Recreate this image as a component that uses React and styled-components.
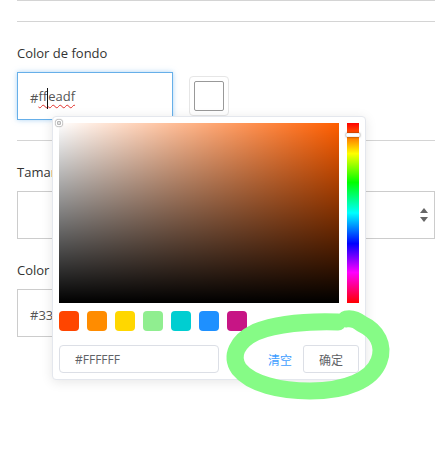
import React from 'react';
import styled, { createGlobalStyle } from 'styled-components';

const GlobalStyle = createGlobalStyle`
  body {
    margin: 0;
    background: #fff;
    font-family: "Open Sans", "Noto Sans CJK SC", sans-serif;
  }
`;

const predefine = ['#ff4500', '#ff8c00', '#ffd700', '#90ee90', '#00ced1', '#1e90ff', '#c71585'];

const App = () => {
    return (
        <Page>
            <GlobalStyle />
            <Form>
                <TopEdge />
                <Fieldset $ruled />
                <Fieldset $ruled>
                    <Field>
                        <Label>Color de fondo</Label>
                        <Row>
                            <TextInput $focused>
                                #<Misspelled>ff<Caret />eadf</Misspelled>
                            </TextInput>
                            <Trigger>
                                <TriggerInner />
                            </Trigger>
                        </Row>
                    </Field>
                </Fieldset>
                <Fieldset>
                    <Field>
                        <Label>Tamaño</Label>
                        <Select>
                            <Arrows>
                                <ArrowUp />
                                <ArrowDown />
                            </Arrows>
                        </Select>
                    </Field>
                    <Field>
                        <Label>Color de texto</Label>
                        <Row>
                            <TextInput>#333333</TextInput>
                            <Trigger>
                                <TriggerInner />
                            </Trigger>
                        </Row>
                    </Field>
                </Fieldset>
            </Form>

            <Dropdown>
                <Main>
                    <SVPanel>
                        <Cursor />
                    </SVPanel>
                    <Hue>
                        <HueThumb />
                    </Hue>
                </Main>
                <Predefine>
                    {predefine.map(c => <Swatch key={c} $color={c} />)}
                </Predefine>
                <Btns>
                    <ValueInput>#FFFFFF</ValueInput>
                    <ClearLink>清空</ClearLink>
                    <OkButton>确定</OkButton>
                </Btns>
            </Dropdown>

            {/* hand-drawn highlight over the buttons */}
            <Annotation viewBox="0 0 446 469" width="446" height="469">
                <path
                    d="M 338 322 C 308 321, 276 324, 256 332 C 237 341, 230 356, 239 369 C 251 384, 280 391, 310 391 C 346 391, 372 380, 379 361 C 385 345, 377 331, 362 324 C 357 320, 351 318, 346 319"
                    fill="none"
                    stroke="#86fb86"
                    strokeWidth="17"
                    strokeLinecap="round"
                    strokeLinejoin="round"
                />
            </Annotation>
        </Page>
    );
};

export default App;

const Page = styled.div`
    position: relative;
    width: 446px;
    height: 469px;
    overflow: hidden;
    padding: 0 11px 0 17px;
    box-sizing: border-box;
`;

const Form = styled.div`
    width: 418px;
`;

const TopEdge = styled.div`
    border-top: 1px solid #d4d4d4;
`;

const Fieldset = styled.div`
    padding-top: 20px;
    border-bottom: ${p => (p.$ruled ? '1px solid #d4d4d4' : 'none')};
`;

const Field = styled.div`
    margin-bottom: 20px;
`;

const Label = styled.div`
    font-size: 13px;
    line-height: 20px;
    color: #333;
    padding-top: 1px;
    margin-bottom: 9px;
`;

const Row = styled.div`
    display: flex;
    align-items: center;
    gap: 16px;
`;

const TextInput = styled.div`
    width: 156px;
    height: 48px;
    box-sizing: border-box;
    border: 1px solid ${p => (p.$focused ? '#66afe9' : '#ccc')};
    box-shadow: ${p => (p.$focused ? '0 0 5px rgba(102, 175, 233, 0.55)' : 'none')};
    padding: 3px 12px 0;
    display: flex;
    align-items: center;
    font-size: 13px;
    color: #555;
    white-space: pre;
`;

const Misspelled = styled.span`
    text-decoration: underline wavy #e0302a;
    text-decoration-thickness: 1px;
    text-underline-offset: 3px;
`;

const Caret = styled.span`
    display: inline-block;
    width: 1px;
    height: 21px;
    background: #111;
    vertical-align: middle;
    margin-top: 2px;
`;

const Trigger = styled.div`
    width: 40px;
    height: 40px;
    box-sizing: border-box;
    border: 1px solid #e6e6e6;
    border-radius: 4px;
    padding: 4px;
`;

const TriggerInner = styled.div`
    width: 100%;
    height: 100%;
    box-sizing: border-box;
    border: 1px solid #999;
    border-radius: 2px;
    background: #fff;
`;

const Select = styled.div`
    height: 48px;
    box-sizing: border-box;
    border: 1px solid #ccc;
    display: flex;
    align-items: center;
    justify-content: flex-end;
    padding-right: 6px;
`;

const Arrows = styled.div`
    display: flex;
    flex-direction: column;
    gap: 4px;
`;

const ArrowUp = styled.div`
    width: 0;
    height: 0;
    border-left: 4px solid transparent;
    border-right: 4px solid transparent;
    border-bottom: 5px solid #666;
`;

const ArrowDown = styled(ArrowUp)`
    border-bottom: none;
    border-top: 5px solid #666;
`;

const Dropdown = styled.div`
    position: absolute;
    left: 52px;
    top: 116px;
    width: 300px;
    padding: 6px;
    background: #fff;
    border: 1px solid #e4e7ed;
    border-radius: 4px;
    box-shadow: 0 2px 12px 0 rgba(0, 0, 0, 0.1);
`;

const Main = styled.div`
    display: flex;
    gap: 8px;
`;

const SVPanel = styled.div`
    position: relative;
    width: 280px;
    height: 180px;
    background: hsl(22, 100%, 50%);
    &::before, &::after {
        content: '';
        position: absolute;
        inset: 0;
    }
    &::before {
        background: linear-gradient(to right, #fff, rgba(255, 255, 255, 0));
    }
    &::after {
        background: linear-gradient(to top, #000, rgba(0, 0, 0, 0));
    }
`;

const Cursor = styled.div`
    position: absolute;
    left: -2px;
    top: -2px;
    width: 4px;
    height: 4px;
    border-radius: 50%;
    z-index: 1;
    box-shadow: 0 0 0 1.5px #fff, inset 0 0 1px 1px rgba(0, 0, 0, 0.3), 0 0 1px 2px rgba(0, 0, 0, 0.4);
`;

const Hue = styled.div`
    position: relative;
    width: 12px;
    height: 180px;
    background: linear-gradient(to bottom, #f00 0%, #ff0 17%, #0f0 33%, #0ff 50%, #00f 67%, #f0f 83%, #f00 100%);
`;

const HueThumb = styled.div`
    position: absolute;
    left: -1px;
    right: -1px;
    top: 10px;
    height: 4px;
    box-sizing: border-box;
    background: #fff;
    border: 1px solid #f0f0f0;
    border-radius: 1px;
    box-shadow: 0 0 2px rgba(0, 0, 0, 0.6);
`;

const Predefine = styled.div`
    display: flex;
    gap: 8px;
    margin-top: 8px;
`;

const Swatch = styled.div`
    width: 20px;
    height: 20px;
    border-radius: 4px;
    background: ${p => p.$color};
`;

const Btns = styled.div`
    display: flex;
    align-items: center;
    margin-top: 14px;
`;

const ValueInput = styled.div`
    width: 160px;
    height: 28px;
    box-sizing: border-box;
    border: 1px solid #dcdfe6;
    border-radius: 4px;
    padding-left: 15px;
    display: flex;
    align-items: center;
    font-size: 12px;
    color: #606266;
    margin-right: auto;
`;

const ClearLink = styled.span`
    font-family: "Noto Sans CJK SC", sans-serif;
    font-size: 12px;
    color: #409eff;
    margin-right: 11px;
`;

const OkButton = styled.div`
    height: 28px;
    box-sizing: border-box;
    padding: 0 15px;
    display: flex;
    align-items: center;
    border: 1px solid #dcdfe6;
    border-radius: 3px;
    font-family: "Noto Sans CJK SC", sans-serif;
    font-size: 12px;
    color: #606266;
`;

const Annotation = styled.svg`
    position: absolute;
    left: 0;
    top: 0;
    pointer-events: none;
`;
